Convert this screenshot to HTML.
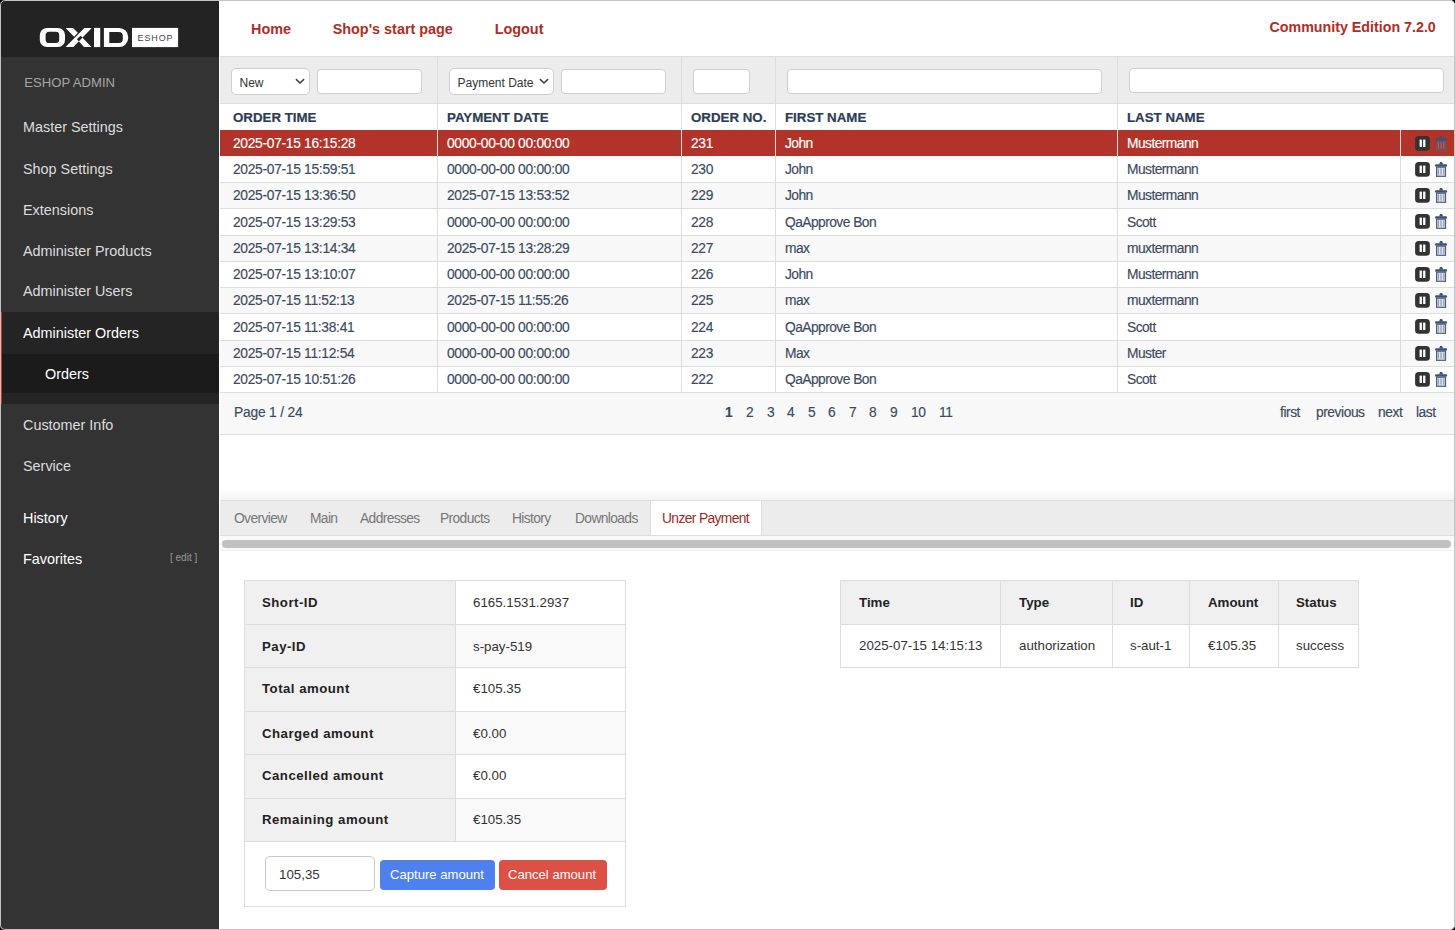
<!DOCTYPE html><html><head><meta charset="utf-8"><title>OXID eShop Admin</title><style>
*{box-sizing:border-box;margin:0;padding:0}
html,body{width:1455px;height:930px;overflow:hidden;background:#000}
body{font-family:"Liberation Sans",sans-serif;position:relative}
#win{position:absolute;left:0;top:0;width:1455px;height:930px;background:#fff;border-radius:5px;overflow:hidden}
#frame{position:absolute;left:0;top:0;width:1455px;height:930px;border:1px solid #c4c4c4;border-radius:5px;pointer-events:none}
.a{position:absolute;white-space:nowrap}
#side{position:absolute;left:0;top:0;width:219px;height:930px;background:#333}
#logo{position:absolute;left:0;top:0;width:219px;height:57px;background:#232323}
.mi{position:absolute;left:23px;font-size:14.4px;color:#ddd;line-height:20px}
.mi.w{color:#fff}
.hd{position:absolute;font-size:14.4px;font-weight:bold;color:#b02d25;line-height:20px}
.cell{position:absolute;font-size:13.3px;line-height:20px;color:#3b4a60;white-space:nowrap}
.d{font-size:13.8px;letter-spacing:-0.3px;-webkit-text-stroke:0.15px currentColor}
.hl{position:absolute;background:#ddd;height:1px}
.vl{position:absolute;background:#ddd;width:1px}
.inp{position:absolute;background:#fff;border:1px solid #cfcfcf;border-radius:4px}
.sel{position:absolute;background:#fff;border:1px solid #cfcfcf;border-radius:5px;font-size:12.5px;color:#333;line-height:20px}
.tab{position:absolute;font-size:13.8px;letter-spacing:-0.62px;color:#777;line-height:20px;top:508px}
</style></head><body><div id="win">
<div id="side"><div id="logo">
<svg class="a" style="left:0;top:0" width="218" height="56" viewBox="0 0 218 56">
<path fill="#fff" fill-rule="evenodd" d="M47 27.9h11a7 7 0 0 1 7 7v5.2a7 7 0 0 1-7 7h-11a7.2 7.2 0 0 1-7.2-7.2v-4.8a7.2 7.2 0 0 1 7.2-7.2zM49.2 31.7h6.6a3.4 3.4 0 0 1 3.4 3.4v4.5a3.4 3.4 0 0 1-3.4 3.4h-6.6a3.6 3.6 0 0 1-3.6-3.6v-4.1a3.6 3.6 0 0 1 3.6-3.6z"/>
<path fill="#fff" d="M65.6 47.1L73.4 47.1L91.8 27.9L84.4 27.9z M65.6 27.9L73.0 27.9L77.83 32.79L74.1 36.74z M76.9 39.3L80.6 35.8L91.46 47.1L84.06 47.1z"/>
<rect fill="#fff" x="94" y="27.9" width="6.2" height="19.2"/>
<path fill="#fff" fill-rule="evenodd" d="M103.9 27.9h15.3a9 9 0 0 1 9 9v1.2a9 9 0 0 1-9 9h-15.3zM109.3 31.9h9.5a4 4 0 0 1 4 4v3a4 4 0 0 1-4 4h-9.5z"/>
<rect fill="#fff" x="132" y="27.9" width="46.1" height="19.2"/>
<text x="137.6" y="40.8" font-family="Liberation Sans" font-size="9" fill="#444" letter-spacing="0.85">ESHOP</text>
</svg>
</div>
<div class="a" style="left:1px;top:312px;width:218px;height:92px;background:#242424;border-left:1px solid #c0392b"></div>
<div class="a" style="left:2px;top:354px;width:217px;height:39px;background:#1b1b1b"></div>
<div class="a" style="left:24.3px;top:72.6px;font-size:13.1px;color:#a6a6a6;line-height:20px">ESHOP ADMIN</div>
<div class="mi" style="top:117.4px">Master Settings</div>
<div class="mi" style="top:159.0px">Shop Settings</div>
<div class="mi" style="top:200.0px">Extensions</div>
<div class="mi" style="top:240.6px">Administer Products</div>
<div class="mi" style="top:281.4px">Administer Users</div>
<div class="mi w" style="top:322.8px">Administer Orders</div>
<div class="mi" style="top:414.7px">Customer Info</div>
<div class="mi" style="top:456.0px">Service</div>
<div class="mi w" style="top:507.9px">History</div>
<div class="mi w" style="top:549.0px">Favorites</div>
<div class="mi w" style="left:45px;top:363.6px">Orders</div>
<div class="a" style="left:170px;top:547.5px;font-size:10px;color:#999;line-height:20px">[ edit ]</div>
</div>
<div class="hd" style="left:251px;top:18.8px">Home</div>
<div class="hd" style="left:332.7px;top:18.8px">Shop's start page</div>
<div class="hd" style="left:494.7px;top:18.8px">Logout</div>
<div class="hd" style="left:1269.5px;top:17.1px;font-size:14.25px">Community Edition 7.2.0</div>
<div class="a" style="left:220px;top:56px;width:1235px;height:48px;background:#ececec;border-top:1px solid #ddd;border-bottom:1px solid #ddd"></div>
<div class="vl" style="left:437px;top:57px;height:73px"></div>
<div class="vl" style="left:681px;top:57px;height:73px"></div>
<div class="vl" style="left:775px;top:57px;height:73px"></div>
<div class="vl" style="left:1117px;top:57px;height:73px"></div>
<div class="sel" style="left:231px;top:68px;width:79px;height:27px"><span class="a" style="left:7.5px;top:3.7px;font-size:12px">New</span><svg class="a" style="right:4.5px;top:8px" width="10" height="8" viewBox="0 0 10 8"><path d="M0.9 2.1L5 6 9.1 2.1" fill="none" stroke="#444" stroke-width="1.6"/></svg></div>
<div class="inp" style="left:317px;top:69px;width:105px;height:25px"></div>
<div class="sel" style="left:449px;top:68px;width:105px;height:27px"><span class="a" style="left:7.5px;top:3.7px;font-size:12px">Payment Date</span><svg class="a" style="right:4.5px;top:8px" width="10" height="8" viewBox="0 0 10 8"><path d="M0.9 2.1L5 6 9.1 2.1" fill="none" stroke="#444" stroke-width="1.6"/></svg></div>
<div class="inp" style="left:561px;top:69px;width:105px;height:25px"></div>
<div class="inp" style="left:693px;top:69px;width:57px;height:25px"></div>
<div class="inp" style="left:787px;top:69px;width:315px;height:25px"></div>
<div class="inp" style="left:1129px;top:68px;width:315px;height:25px"></div>
<div class="cell" style="left:233px;top:107.5px;font-weight:bold;color:#2c3d56;-webkit-text-stroke:0.2px currentColor">ORDER TIME</div>
<div class="cell" style="left:447px;top:107.5px;font-weight:bold;color:#2c3d56;-webkit-text-stroke:0.2px currentColor">PAYMENT DATE</div>
<div class="cell" style="left:691px;top:107.5px;font-weight:bold;color:#2c3d56;-webkit-text-stroke:0.2px currentColor">ORDER NO.</div>
<div class="cell" style="left:785px;top:107.5px;font-weight:bold;color:#2c3d56;-webkit-text-stroke:0.2px currentColor">FIRST NAME</div>
<div class="cell" style="left:1127px;top:107.5px;font-weight:bold;color:#2c3d56;-webkit-text-stroke:0.2px currentColor">LAST NAME</div>
<div class="a" style="left:220px;top:130px;width:1235px;height:26px;background:#b2332a"></div>
<div class="a" style="left:220px;top:156px;width:1235px;height:26px;background:#fff"></div>
<div class="a" style="left:220px;top:182px;width:1235px;height:26px;background:#f8f8f8"></div>
<div class="a" style="left:220px;top:208px;width:1235px;height:27px;background:#fff"></div>
<div class="a" style="left:220px;top:235px;width:1235px;height:26px;background:#f8f8f8"></div>
<div class="a" style="left:220px;top:261px;width:1235px;height:26px;background:#fff"></div>
<div class="a" style="left:220px;top:287px;width:1235px;height:26px;background:#f8f8f8"></div>
<div class="a" style="left:220px;top:313px;width:1235px;height:27px;background:#fff"></div>
<div class="a" style="left:220px;top:340px;width:1235px;height:26px;background:#f8f8f8"></div>
<div class="a" style="left:220px;top:366px;width:1235px;height:26px;background:#fff"></div>
<div class="hl" style="left:220px;top:182px;width:1235px"></div>
<div class="hl" style="left:220px;top:208px;width:1235px"></div>
<div class="hl" style="left:220px;top:235px;width:1235px"></div>
<div class="hl" style="left:220px;top:261px;width:1235px"></div>
<div class="hl" style="left:220px;top:287px;width:1235px"></div>
<div class="hl" style="left:220px;top:313px;width:1235px"></div>
<div class="hl" style="left:220px;top:340px;width:1235px"></div>
<div class="hl" style="left:220px;top:366px;width:1235px"></div>
<div class="hl" style="left:220px;top:392px;width:1235px"></div>
<div class="vl" style="left:437px;top:130px;height:262px;background:#dcdcdc"></div>
<div class="vl" style="left:681px;top:130px;height:262px;background:#dcdcdc"></div>
<div class="vl" style="left:775px;top:130px;height:262px;background:#dcdcdc"></div>
<div class="vl" style="left:1117px;top:130px;height:262px;background:#dcdcdc"></div>
<div class="vl" style="left:1400px;top:130px;height:262px;background:#dcdcdc"></div>
<div class="cell d" style="left:233px;top:133.97px;color:#fff">2025-07-15 16:15:28</div>
<div class="cell d" style="left:447px;top:133.97px;color:#fff">0000-00-00 00:00:00</div>
<div class="cell d" style="left:691px;top:133.97px;color:#fff">231</div>
<div class="cell d" style="left:785px;top:133.97px;color:#fff;letter-spacing:-0.55px">John</div>
<div class="cell d" style="left:1127px;top:133.97px;color:#fff;letter-spacing:-0.55px">Mustermann</div>
<svg class="a" style="left:1414px;top:135px" width="17" height="17" viewBox="0 0 17 17"><rect x="1.1" y="1" width="14.8" height="14.8" rx="3.6" fill="#333"/><rect x="5.6" y="4.6" width="2.3" height="7.4" fill="#fff"/><rect x="9.1" y="4.6" width="2.3" height="7.4" fill="#fff"/></svg>
<svg class="a" style="left:1434px;top:135px" width="15" height="17" viewBox="0 0 15 17"><path d="M5.2 3.4C5.4 1.6 6 1 7.1 1S8.8 1.6 9 3.4z" fill="#3d5273"/><path d="M1.6 3.3h10.9l0.6 1.2-0.6 1.2H1.6L1 4.5z" fill="#3d5273"/><rect x="2.6" y="6.2" width="8.9" height="9.1" stroke="#4a5f80" stroke-width="1.2" fill="none"/><path d="M4.3 7.3v6.5M7.05 7.3v6.5M9.8 7.3v6.5" stroke="#7a89a2" stroke-width="0.9"/></svg>
<div class="cell d" style="left:233px;top:160.22px;color:#3b4a60">2025-07-15 15:59:51</div>
<div class="cell d" style="left:447px;top:160.22px;color:#3b4a60">0000-00-00 00:00:00</div>
<div class="cell d" style="left:691px;top:160.22px;color:#3b4a60">230</div>
<div class="cell d" style="left:785px;top:160.22px;color:#3b4a60;letter-spacing:-0.55px">John</div>
<div class="cell d" style="left:1127px;top:160.22px;color:#3b4a60;letter-spacing:-0.55px">Mustermann</div>
<svg class="a" style="left:1414px;top:161px" width="17" height="17" viewBox="0 0 17 17"><rect x="1.1" y="1" width="14.8" height="14.8" rx="3.6" fill="#333"/><rect x="5.6" y="4.6" width="2.3" height="7.4" fill="#fff"/><rect x="9.1" y="4.6" width="2.3" height="7.4" fill="#fff"/></svg>
<svg class="a" style="left:1434px;top:161px" width="15" height="17" viewBox="0 0 15 17"><path d="M5.2 3.4C5.4 1.6 6 1 7.1 1S8.8 1.6 9 3.4z" fill="#3d5273"/><path d="M1.6 3.3h10.9l0.6 1.2-0.6 1.2H1.6L1 4.5z" fill="#3d5273"/><rect x="2.6" y="6.2" width="8.9" height="9.1" stroke="#4a5f80" stroke-width="1.2" fill="#dde1e8"/><path d="M4.3 7.3v6.5M7.05 7.3v6.5M9.8 7.3v6.5" stroke="#7a89a2" stroke-width="0.9"/></svg>
<div class="cell d" style="left:233px;top:186.47px;color:#3b4a60">2025-07-15 13:36:50</div>
<div class="cell d" style="left:447px;top:186.47px;color:#3b4a60">2025-07-15 13:53:52</div>
<div class="cell d" style="left:691px;top:186.47px;color:#3b4a60">229</div>
<div class="cell d" style="left:785px;top:186.47px;color:#3b4a60;letter-spacing:-0.55px">John</div>
<div class="cell d" style="left:1127px;top:186.47px;color:#3b4a60;letter-spacing:-0.55px">Mustermann</div>
<svg class="a" style="left:1414px;top:187px" width="17" height="17" viewBox="0 0 17 17"><rect x="1.1" y="1" width="14.8" height="14.8" rx="3.6" fill="#333"/><rect x="5.6" y="4.6" width="2.3" height="7.4" fill="#fff"/><rect x="9.1" y="4.6" width="2.3" height="7.4" fill="#fff"/></svg>
<svg class="a" style="left:1434px;top:187px" width="15" height="17" viewBox="0 0 15 17"><path d="M5.2 3.4C5.4 1.6 6 1 7.1 1S8.8 1.6 9 3.4z" fill="#3d5273"/><path d="M1.6 3.3h10.9l0.6 1.2-0.6 1.2H1.6L1 4.5z" fill="#3d5273"/><rect x="2.6" y="6.2" width="8.9" height="9.1" stroke="#4a5f80" stroke-width="1.2" fill="#dde1e8"/><path d="M4.3 7.3v6.5M7.05 7.3v6.5M9.8 7.3v6.5" stroke="#7a89a2" stroke-width="0.9"/></svg>
<div class="cell d" style="left:233px;top:212.72px;color:#3b4a60">2025-07-15 13:29:53</div>
<div class="cell d" style="left:447px;top:212.72px;color:#3b4a60">0000-00-00 00:00:00</div>
<div class="cell d" style="left:691px;top:212.72px;color:#3b4a60">228</div>
<div class="cell d" style="left:785px;top:212.72px;color:#3b4a60;letter-spacing:-0.55px">QaApprove Bon</div>
<div class="cell d" style="left:1127px;top:212.72px;color:#3b4a60;letter-spacing:-0.55px">Scott</div>
<svg class="a" style="left:1414px;top:213px" width="17" height="17" viewBox="0 0 17 17"><rect x="1.1" y="1" width="14.8" height="14.8" rx="3.6" fill="#333"/><rect x="5.6" y="4.6" width="2.3" height="7.4" fill="#fff"/><rect x="9.1" y="4.6" width="2.3" height="7.4" fill="#fff"/></svg>
<svg class="a" style="left:1434px;top:213px" width="15" height="17" viewBox="0 0 15 17"><path d="M5.2 3.4C5.4 1.6 6 1 7.1 1S8.8 1.6 9 3.4z" fill="#3d5273"/><path d="M1.6 3.3h10.9l0.6 1.2-0.6 1.2H1.6L1 4.5z" fill="#3d5273"/><rect x="2.6" y="6.2" width="8.9" height="9.1" stroke="#4a5f80" stroke-width="1.2" fill="#dde1e8"/><path d="M4.3 7.3v6.5M7.05 7.3v6.5M9.8 7.3v6.5" stroke="#7a89a2" stroke-width="0.9"/></svg>
<div class="cell d" style="left:233px;top:238.97px;color:#3b4a60">2025-07-15 13:14:34</div>
<div class="cell d" style="left:447px;top:238.97px;color:#3b4a60">2025-07-15 13:28:29</div>
<div class="cell d" style="left:691px;top:238.97px;color:#3b4a60">227</div>
<div class="cell d" style="left:785px;top:238.97px;color:#3b4a60;letter-spacing:-0.55px">max</div>
<div class="cell d" style="left:1127px;top:238.97px;color:#3b4a60;letter-spacing:-0.55px">muxtermann</div>
<svg class="a" style="left:1414px;top:240px" width="17" height="17" viewBox="0 0 17 17"><rect x="1.1" y="1" width="14.8" height="14.8" rx="3.6" fill="#333"/><rect x="5.6" y="4.6" width="2.3" height="7.4" fill="#fff"/><rect x="9.1" y="4.6" width="2.3" height="7.4" fill="#fff"/></svg>
<svg class="a" style="left:1434px;top:240px" width="15" height="17" viewBox="0 0 15 17"><path d="M5.2 3.4C5.4 1.6 6 1 7.1 1S8.8 1.6 9 3.4z" fill="#3d5273"/><path d="M1.6 3.3h10.9l0.6 1.2-0.6 1.2H1.6L1 4.5z" fill="#3d5273"/><rect x="2.6" y="6.2" width="8.9" height="9.1" stroke="#4a5f80" stroke-width="1.2" fill="#dde1e8"/><path d="M4.3 7.3v6.5M7.05 7.3v6.5M9.8 7.3v6.5" stroke="#7a89a2" stroke-width="0.9"/></svg>
<div class="cell d" style="left:233px;top:265.22px;color:#3b4a60">2025-07-15 13:10:07</div>
<div class="cell d" style="left:447px;top:265.22px;color:#3b4a60">0000-00-00 00:00:00</div>
<div class="cell d" style="left:691px;top:265.22px;color:#3b4a60">226</div>
<div class="cell d" style="left:785px;top:265.22px;color:#3b4a60;letter-spacing:-0.55px">John</div>
<div class="cell d" style="left:1127px;top:265.22px;color:#3b4a60;letter-spacing:-0.55px">Mustermann</div>
<svg class="a" style="left:1414px;top:266px" width="17" height="17" viewBox="0 0 17 17"><rect x="1.1" y="1" width="14.8" height="14.8" rx="3.6" fill="#333"/><rect x="5.6" y="4.6" width="2.3" height="7.4" fill="#fff"/><rect x="9.1" y="4.6" width="2.3" height="7.4" fill="#fff"/></svg>
<svg class="a" style="left:1434px;top:266px" width="15" height="17" viewBox="0 0 15 17"><path d="M5.2 3.4C5.4 1.6 6 1 7.1 1S8.8 1.6 9 3.4z" fill="#3d5273"/><path d="M1.6 3.3h10.9l0.6 1.2-0.6 1.2H1.6L1 4.5z" fill="#3d5273"/><rect x="2.6" y="6.2" width="8.9" height="9.1" stroke="#4a5f80" stroke-width="1.2" fill="#dde1e8"/><path d="M4.3 7.3v6.5M7.05 7.3v6.5M9.8 7.3v6.5" stroke="#7a89a2" stroke-width="0.9"/></svg>
<div class="cell d" style="left:233px;top:291.47px;color:#3b4a60">2025-07-15 11:52:13</div>
<div class="cell d" style="left:447px;top:291.47px;color:#3b4a60">2025-07-15 11:55:26</div>
<div class="cell d" style="left:691px;top:291.47px;color:#3b4a60">225</div>
<div class="cell d" style="left:785px;top:291.47px;color:#3b4a60;letter-spacing:-0.55px">max</div>
<div class="cell d" style="left:1127px;top:291.47px;color:#3b4a60;letter-spacing:-0.55px">muxtermann</div>
<svg class="a" style="left:1414px;top:292px" width="17" height="17" viewBox="0 0 17 17"><rect x="1.1" y="1" width="14.8" height="14.8" rx="3.6" fill="#333"/><rect x="5.6" y="4.6" width="2.3" height="7.4" fill="#fff"/><rect x="9.1" y="4.6" width="2.3" height="7.4" fill="#fff"/></svg>
<svg class="a" style="left:1434px;top:292px" width="15" height="17" viewBox="0 0 15 17"><path d="M5.2 3.4C5.4 1.6 6 1 7.1 1S8.8 1.6 9 3.4z" fill="#3d5273"/><path d="M1.6 3.3h10.9l0.6 1.2-0.6 1.2H1.6L1 4.5z" fill="#3d5273"/><rect x="2.6" y="6.2" width="8.9" height="9.1" stroke="#4a5f80" stroke-width="1.2" fill="#dde1e8"/><path d="M4.3 7.3v6.5M7.05 7.3v6.5M9.8 7.3v6.5" stroke="#7a89a2" stroke-width="0.9"/></svg>
<div class="cell d" style="left:233px;top:317.72px;color:#3b4a60">2025-07-15 11:38:41</div>
<div class="cell d" style="left:447px;top:317.72px;color:#3b4a60">0000-00-00 00:00:00</div>
<div class="cell d" style="left:691px;top:317.72px;color:#3b4a60">224</div>
<div class="cell d" style="left:785px;top:317.72px;color:#3b4a60;letter-spacing:-0.55px">QaApprove Bon</div>
<div class="cell d" style="left:1127px;top:317.72px;color:#3b4a60;letter-spacing:-0.55px">Scott</div>
<svg class="a" style="left:1414px;top:318px" width="17" height="17" viewBox="0 0 17 17"><rect x="1.1" y="1" width="14.8" height="14.8" rx="3.6" fill="#333"/><rect x="5.6" y="4.6" width="2.3" height="7.4" fill="#fff"/><rect x="9.1" y="4.6" width="2.3" height="7.4" fill="#fff"/></svg>
<svg class="a" style="left:1434px;top:318px" width="15" height="17" viewBox="0 0 15 17"><path d="M5.2 3.4C5.4 1.6 6 1 7.1 1S8.8 1.6 9 3.4z" fill="#3d5273"/><path d="M1.6 3.3h10.9l0.6 1.2-0.6 1.2H1.6L1 4.5z" fill="#3d5273"/><rect x="2.6" y="6.2" width="8.9" height="9.1" stroke="#4a5f80" stroke-width="1.2" fill="#dde1e8"/><path d="M4.3 7.3v6.5M7.05 7.3v6.5M9.8 7.3v6.5" stroke="#7a89a2" stroke-width="0.9"/></svg>
<div class="cell d" style="left:233px;top:343.97px;color:#3b4a60">2025-07-15 11:12:54</div>
<div class="cell d" style="left:447px;top:343.97px;color:#3b4a60">0000-00-00 00:00:00</div>
<div class="cell d" style="left:691px;top:343.97px;color:#3b4a60">223</div>
<div class="cell d" style="left:785px;top:343.97px;color:#3b4a60;letter-spacing:-0.55px">Max</div>
<div class="cell d" style="left:1127px;top:343.97px;color:#3b4a60;letter-spacing:-0.55px">Muster</div>
<svg class="a" style="left:1414px;top:345px" width="17" height="17" viewBox="0 0 17 17"><rect x="1.1" y="1" width="14.8" height="14.8" rx="3.6" fill="#333"/><rect x="5.6" y="4.6" width="2.3" height="7.4" fill="#fff"/><rect x="9.1" y="4.6" width="2.3" height="7.4" fill="#fff"/></svg>
<svg class="a" style="left:1434px;top:345px" width="15" height="17" viewBox="0 0 15 17"><path d="M5.2 3.4C5.4 1.6 6 1 7.1 1S8.8 1.6 9 3.4z" fill="#3d5273"/><path d="M1.6 3.3h10.9l0.6 1.2-0.6 1.2H1.6L1 4.5z" fill="#3d5273"/><rect x="2.6" y="6.2" width="8.9" height="9.1" stroke="#4a5f80" stroke-width="1.2" fill="#dde1e8"/><path d="M4.3 7.3v6.5M7.05 7.3v6.5M9.8 7.3v6.5" stroke="#7a89a2" stroke-width="0.9"/></svg>
<div class="cell d" style="left:233px;top:370.22px;color:#3b4a60">2025-07-15 10:51:26</div>
<div class="cell d" style="left:447px;top:370.22px;color:#3b4a60">0000-00-00 00:00:00</div>
<div class="cell d" style="left:691px;top:370.22px;color:#3b4a60">222</div>
<div class="cell d" style="left:785px;top:370.22px;color:#3b4a60;letter-spacing:-0.55px">QaApprove Bon</div>
<div class="cell d" style="left:1127px;top:370.22px;color:#3b4a60;letter-spacing:-0.55px">Scott</div>
<svg class="a" style="left:1414px;top:371px" width="17" height="17" viewBox="0 0 17 17"><rect x="1.1" y="1" width="14.8" height="14.8" rx="3.6" fill="#333"/><rect x="5.6" y="4.6" width="2.3" height="7.4" fill="#fff"/><rect x="9.1" y="4.6" width="2.3" height="7.4" fill="#fff"/></svg>
<svg class="a" style="left:1434px;top:371px" width="15" height="17" viewBox="0 0 15 17"><path d="M5.2 3.4C5.4 1.6 6 1 7.1 1S8.8 1.6 9 3.4z" fill="#3d5273"/><path d="M1.6 3.3h10.9l0.6 1.2-0.6 1.2H1.6L1 4.5z" fill="#3d5273"/><rect x="2.6" y="6.2" width="8.9" height="9.1" stroke="#4a5f80" stroke-width="1.2" fill="#dde1e8"/><path d="M4.3 7.3v6.5M7.05 7.3v6.5M9.8 7.3v6.5" stroke="#7a89a2" stroke-width="0.9"/></svg>
<div class="a" style="left:220px;top:392px;width:1235px;height:43px;background:#f8f8f8;border-top:1px solid #ddd;border-bottom:1px solid #ddd"></div>
<div class="cell d" style="left:234px;top:402.7px;letter-spacing:-0.2px">Page 1 / 24</div>
<div class="cell d" style="left:725px;top:402.7px;font-weight:bold;">1</div>
<div class="cell d" style="left:746px;top:402.7px;">2</div>
<div class="cell d" style="left:767px;top:402.7px;">3</div>
<div class="cell d" style="left:787px;top:402.7px;">4</div>
<div class="cell d" style="left:808px;top:402.7px;">5</div>
<div class="cell d" style="left:828px;top:402.7px;">6</div>
<div class="cell d" style="left:849px;top:402.7px;">7</div>
<div class="cell d" style="left:869px;top:402.7px;">8</div>
<div class="cell d" style="left:890px;top:402.7px;">9</div>
<div class="cell d" style="left:911px;top:402.7px;">10</div>
<div class="cell d" style="left:939px;top:402.7px;">11</div>
<div class="cell d" style="left:1280px;top:402.7px;letter-spacing:-0.45px">first</div>
<div class="cell d" style="left:1316px;top:402.7px;letter-spacing:-0.45px">previous</div>
<div class="cell d" style="left:1378px;top:402.7px;letter-spacing:-0.45px">next</div>
<div class="cell d" style="left:1416px;top:402.7px;letter-spacing:-0.45px">last</div>
<div class="a" style="left:220px;top:489px;width:1235px;height:11px;background:linear-gradient(#fff,#f3f3f3)"></div>
<div class="a" style="left:220px;top:500px;width:1235px;height:36px;background:#ececec;border-top:1px solid #ddd;border-bottom:1px solid #ddd"></div>
<div class="a" style="left:650px;top:500px;width:112px;height:35px;background:#fff;border:1px solid #ddd;border-bottom:none"></div>
<div class="tab" style="left:234px;top:508.8px">Overview</div>
<div class="tab" style="left:310px;top:508.8px">Main</div>
<div class="tab" style="left:360px;top:508.8px">Addresses</div>
<div class="tab" style="left:440px;top:508.8px">Products</div>
<div class="tab" style="left:512px;top:508.8px">History</div>
<div class="tab" style="left:575px;top:508.8px">Downloads</div>
<div class="tab" style="left:662px;top:508.8px;color:#9b2a22">Unzer Payment</div>
<div class="a" style="left:220px;top:536px;width:1235px;height:14px;background:#f9f9f9"></div>
<div class="a" style="left:222px;top:540px;width:1229px;height:8px;background:#c1c1c1;border-radius:4px"></div>
<div class="hl" style="left:220px;top:550px;width:1235px;background:#eee"></div>
<div class="a" style="left:244px;top:580px;width:382px;height:327px;border:1px solid #ddd;background:#fff"></div>
<div class="a" style="left:245px;top:581px;width:210px;height:44.10000000000002px;background:#f0f0f0"></div>
<div class="hl" style="left:245px;top:624.1px;width:380px"></div>
<div class="cell" style="left:262px;top:592.8px;font-weight:bold;color:#222;font-size:13.2px;letter-spacing:0.5px">Short-ID</div>
<div class="cell" style="left:473px;top:592.8px;color:#333">6165.1531.2937</div>
<div class="a" style="left:245px;top:625.1px;width:210px;height:43.19999999999993px;background:#f0f0f0"></div>
<div class="a" style="left:456px;top:625.1px;width:169px;height:43.19999999999993px;background:#f9f9f9"></div>
<div class="hl" style="left:245px;top:667.3px;width:380px"></div>
<div class="cell" style="left:262px;top:636.5px;font-weight:bold;color:#222;font-size:13.2px;letter-spacing:0.5px">Pay-ID</div>
<div class="cell" style="left:473px;top:636.5px;color:#333">s-pay-519</div>
<div class="a" style="left:245px;top:668.3px;width:210px;height:43.200000000000045px;background:#f0f0f0"></div>
<div class="hl" style="left:245px;top:710.5px;width:380px"></div>
<div class="cell" style="left:262px;top:679.4px;font-weight:bold;color:#222;font-size:13.2px;letter-spacing:0.5px">Total amount</div>
<div class="cell" style="left:473px;top:679.4px;color:#333">&euro;105.35</div>
<div class="a" style="left:245px;top:711.5px;width:210px;height:43.299999999999955px;background:#f0f0f0"></div>
<div class="a" style="left:456px;top:711.5px;width:169px;height:43.299999999999955px;background:#f9f9f9"></div>
<div class="hl" style="left:245px;top:753.8px;width:380px"></div>
<div class="cell" style="left:262px;top:723.6px;font-weight:bold;color:#222;font-size:13.2px;letter-spacing:0.5px">Charged amount</div>
<div class="cell" style="left:473px;top:723.6px;color:#333">&euro;0.00</div>
<div class="a" style="left:245px;top:754.8px;width:210px;height:43.700000000000045px;background:#f0f0f0"></div>
<div class="hl" style="left:245px;top:797.5px;width:380px"></div>
<div class="cell" style="left:262px;top:766.3px;font-weight:bold;color:#222;font-size:13.2px;letter-spacing:0.5px">Cancelled amount</div>
<div class="cell" style="left:473px;top:766.3px;color:#333">&euro;0.00</div>
<div class="a" style="left:245px;top:798.5px;width:210px;height:43.5px;background:#f0f0f0"></div>
<div class="a" style="left:456px;top:798.5px;width:169px;height:43.5px;background:#f9f9f9"></div>
<div class="hl" style="left:245px;top:841px;width:380px"></div>
<div class="cell" style="left:262px;top:809.6px;font-weight:bold;color:#222;font-size:13.2px;letter-spacing:0.5px">Remaining amount</div>
<div class="cell" style="left:473px;top:809.6px;color:#333">&euro;105.35</div>
<div class="vl" style="left:455px;top:581px;height:260px"></div>
<div class="a" style="left:265px;top:856px;width:110px;height:35px;border:1px solid #c8c8c8;border-radius:5px;background:#fff"></div>
<div class="cell" style="left:279px;top:864.7px;color:#333">105,35</div>
<div class="a" style="left:380px;top:860px;width:115px;height:30px;background:#4f80ef;border-radius:4px"></div>
<div class="a" style="left:390px;top:864.5px;font-size:13.1px;line-height:20px;color:#fff">Capture amount</div>
<div class="a" style="left:499px;top:860px;width:108px;height:30px;background:#dc5045;border-radius:4px"></div>
<div class="a" style="left:508px;top:864.5px;font-size:13.1px;line-height:20px;color:#fff">Cancel amount</div>
<div class="a" style="left:840px;top:580px;width:519px;height:88px;border:1px solid #ddd;background:#fff"></div>
<div class="a" style="left:841px;top:581px;width:517px;height:43px;background:#f0f0f0"></div>
<div class="hl" style="left:841px;top:624px;width:517px"></div>
<div class="vl" style="left:1000px;top:581px;height:86px"></div>
<div class="vl" style="left:1112px;top:581px;height:86px"></div>
<div class="vl" style="left:1189px;top:581px;height:86px"></div>
<div class="vl" style="left:1278px;top:581px;height:86px"></div>
<div class="cell" style="left:859px;top:592.5px;font-weight:bold;color:#222">Time</div>
<div class="cell" style="left:1019px;top:592.5px;font-weight:bold;color:#222">Type</div>
<div class="cell" style="left:1130px;top:592.5px;font-weight:bold;color:#222">ID</div>
<div class="cell" style="left:1208px;top:592.5px;font-weight:bold;color:#222">Amount</div>
<div class="cell" style="left:1296px;top:592.5px;font-weight:bold;color:#222">Status</div>
<div class="cell" style="left:859px;top:635.8px;color:#333">2025-07-15 14:15:13</div>
<div class="cell" style="left:1019px;top:635.8px;color:#333">authorization</div>
<div class="cell" style="left:1130px;top:635.8px;color:#333">s-aut-1</div>
<div class="cell" style="left:1208px;top:635.8px;color:#333">&euro;105.35</div>
<div class="cell" style="left:1296px;top:635.8px;color:#333">success</div>
<div id="frame"></div></div></body></html>
